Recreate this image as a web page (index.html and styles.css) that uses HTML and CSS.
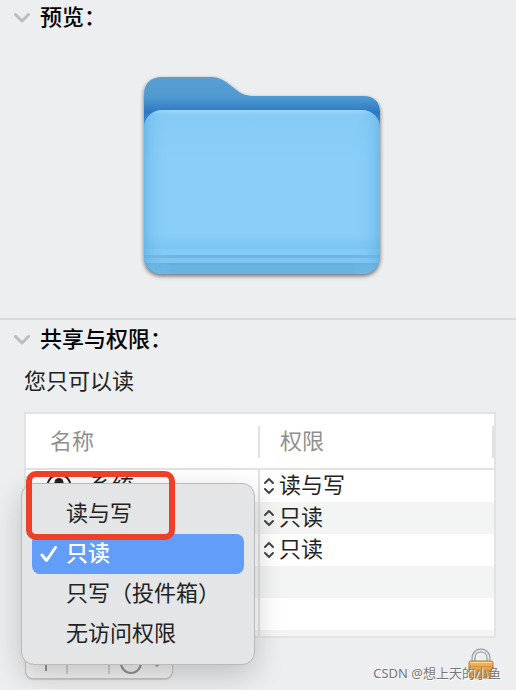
FILE: index.html
```
<!DOCTYPE html>
<html lang="zh-CN">
<head>
    <meta charset="utf-8">
    <meta name="viewport" content="width=device-width, initial-scale=1">
    <title>共享与权限</title>
    <link rel="stylesheet" href="styles.css">
</head>
<body>
    <section class="preview">
        <h2><button type="button" class="toggle">
            <svg width="16" height="10" viewBox="0 0 16 10"><path d="M1.5 1.5 8 8 14.500 1.500"/></svg>
            预览：
        </button></h2>
        <div class="folder">
            <svg width="256" height="220" viewBox="134 68 256 220" role="img" aria-label="文件夹">
                <defs>
                    <linearGradient id="back" gradientUnits="userSpaceOnUse" x1="0" y1="76" x2="0" y2="124">
                        <stop offset="0" stop-color="#5a9fd2"/>
                        <stop offset="0.45" stop-color="#4f99d0"/>
                        <stop offset="0.75" stop-color="#2c78c5"/>
                        <stop offset="1" stop-color="#3d8bcd"/>
                    </linearGradient>
                    <linearGradient id="sides">
                        <stop offset="0" stop-color="#58a9e0" stop-opacity="0.55"/>
                        <stop offset="0.03" stop-color="#6bb8e9" stop-opacity="0.4"/>
                        <stop offset="0.12" stop-color="#8acff9" stop-opacity="0"/>
                        <stop offset="0.88" stop-color="#8acff9" stop-opacity="0"/>
                        <stop offset="0.97" stop-color="#6bb8e9" stop-opacity="0.4"/>
                        <stop offset="1" stop-color="#58a9e0" stop-opacity="0.55"/>
                    </linearGradient>
                    <linearGradient id="front" x1="0" y1="0" x2="0" y2="1">
                        <stop offset="0" stop-color="#a0d9fb"/>
                        <stop offset="0.03" stop-color="#86cbf6"/>
                        <stop offset="0.3" stop-color="#8acff9"/>
                        <stop offset="0.75" stop-color="#8acff9"/>
                        <stop offset="0.84" stop-color="#7cc4f1"/>
                        <stop offset="1" stop-color="#7cc4f1"/>
                    </linearGradient>
                    <filter id="shadow" x="-10%" y="-10%" width="120%" height="120%">
                        <feDropShadow dx="0" dy="2" stdDeviation="2" flood-color="#000" flood-opacity="0.55"/>
                    </filter>
                    <clipPath id="frontClip"><rect x="144" y="110" width="236" height="164" rx="18"/></clipPath>
                </defs>
                <path filter="url(#shadow)" fill="url(#back)" d="M144 95C144 83 151 77 162 77H211C222 77 227 83 234 88C241 94 245 96 255 96H364C374 96 380 102 380 112V256C380 267 373 274 362 274H162C151 274 144 267 144 256Z"/>
                <g clip-path="url(#frontClip)">
                    <rect x="144" y="110" width="236" height="164" fill="url(#front)"/>
                    <rect x="144" y="249" width="236" height="6" fill="#85caf4"/>
                    <rect x="144" y="255" width="236" height="3" fill="#6bb5e4"/>
                    <rect x="144" y="258" width="236" height="5" fill="#7fc5f0"/>
                    <rect x="144" y="263" width="236" height="2" fill="#63addd"/>
                    <rect x="144" y="265" width="236" height="9" fill="#69b3e2"/>
                    <rect x="144" y="110" width="236" height="164" fill="url(#sides)"/>
                </g>
            </svg>
        </div>
    </section>

    <section class="sharing">
        <h2><button type="button" class="toggle">
            <svg width="16" height="10" viewBox="0 0 16 10"><path d="M1.5 1.5 8 8 14.500 1.500"/></svg>
            共享与权限：
        </button></h2>
        <p class="access">您只可以读</p>

        <div class="list">
            <table>
                <thead>
                    <tr>
                        <th class="name"><span>名称</span></th>
                        <th><span>权限</span></th>
                    </tr>
                </thead>
                <tbody>
                    <tr>
                        <td><div class="user">
                            <svg width="26" height="26" viewBox="0 0 26 26"><circle cx="13" cy="13" r="11.500" fill="none" stroke="#222" stroke-width="2"/><circle cx="13" cy="9.500" r="4.500" fill="#222"/><path d="M5 21C6 16 9 15 13 15S20 16 21 21Q17 24 13 24T5 21Z" fill="#222"/></svg>
                            系统
                        </div></td>
                        <td><div class="rights">
                            <svg width="12" height="18" viewBox="0 0 12 18"><path d="M2 6 6 2 10 6M2 12 6 16 10 12"/></svg>
                            <select aria-label="系统权限"><option>读与写</option></select>
                        </div></td>
                    </tr>
                    <tr>
                        <td></td>
                        <td><div class="rights">
                            <svg width="12" height="18" viewBox="0 0 12 18"><path d="M2 6 6 2 10 6M2 12 6 16 10 12"/></svg>
                            <select aria-label="权限"><option>只读</option></select>
                        </div></td>
                    </tr>
                    <tr>
                        <td></td>
                        <td><div class="rights">
                            <svg width="12" height="18" viewBox="0 0 12 18"><path d="M2 6 6 2 10 6M2 12 6 16 10 12"/></svg>
                            <select aria-label="权限"><option>只读</option></select>
                        </div></td>
                    </tr>
                    <tr><td></td><td></td></tr>
                    <tr><td></td><td></td></tr>
                    <tr class="last"><td></td><td></td></tr>
                </tbody>
            </table>

            <div class="menu" role="menu">
                <button type="button" role="menuitemradio" aria-checked="false">读与写</button>
                <button type="button" role="menuitemradio" aria-checked="true" class="selected">
                    <svg width="18" height="18" viewBox="0 0 18 18"><path d="M2 10 6.500 15.500 15.500 2.500"/></svg>
                    只读
                </button>
                <button type="button" role="menuitemradio" aria-checked="false">只写（投件箱）</button>
                <button type="button" role="menuitemradio" aria-checked="false">无访问权限</button>
            </div>
            <div class="mark"></div>
        </div>

        <div class="footer">
            <div class="tools">
                <button type="button" aria-label="添加"><svg width="18" height="18" viewBox="0 0 18 18"><path d="M9 1V17M1 9H17"/></svg></button>
                <button type="button" aria-label="移除"><svg width="18" height="18" viewBox="0 0 18 18"><path d="M1 9H17"/></svg></button>
                <button type="button" class="more" aria-label="更多"><svg width="42" height="22" viewBox="0 0 42 22"><circle cx="11" cy="11" r="10"/><path d="M6 11H7M11 11H12M16 11H17"/><path d="M33 9 37 13 41 9" stroke-width="3"/></svg></button>
            </div>
            <button type="button" class="lock" aria-label="锁定">
                <svg width="26" height="32" viewBox="0 0 26 32">
                    <defs>
                        <linearGradient id="gold" x1="0" y1="0" x2="0" y2="1">
                            <stop offset="0" stop-color="#f1b862"/>
                            <stop offset="0.5" stop-color="#e5a047"/>
                            <stop offset="1" stop-color="#c8812e"/>
                        </linearGradient>
                    </defs>
                    <path d="M5.500 16V11C5.500 1 20.500 1 20.500 11V16" fill="none" stroke="#8d949c" stroke-width="4"/>
                    <path d="M5.500 16V11C5.500 1 20.500 1 20.500 11V16" fill="none" stroke="#dce3ea" stroke-width="2"/>
                    <rect x="1" y="14" width="24" height="17" rx="1.500" fill="url(#gold)" stroke="#b9772c"/>
                    <path d="M2 15.500H24" stroke="#ffdc99"/>
                    <path d="M2 19.500H24M2 23.500H24M2 27.500H24" stroke="#c98734" stroke-opacity="0.6"/>
                </svg>
            </button>
            <span class="credit">CSDN @想上天的小鱼</span>
        </div>
    </section>
</body>
</html>
```
FILE: styles.css
```
* {
    box-sizing: border-box;
}

body {
    margin: 0;
    background-color: #edeef0;
    color: #222;
    font-family: "Liberation Sans", "Noto Sans CJK SC", sans-serif;
    font-size: 22px;
    line-height: 32px;
}

button, select {
    margin: 0;
    padding: 0;
    border: 0;
    background: none;
    color: inherit;
    font: inherit;
}

svg {
    display: block;
    flex: none;
}

h2 {
    margin: 0;
    font-size: 22px;
    font-weight: 500;
}

.toggle {
    display: flex;
    align-items: center;
    gap: 10px;
    height: 36px;
    padding-left: 14px;
    color: #000;
}

.toggle path {
    fill: none;
    stroke: #bcbdbf;
    stroke-width: 3;
    stroke-linecap: round;
    stroke-linejoin: round;
}

.preview {
    padding-bottom: 30px;
    border-bottom: 2px solid #d9dadc;
}

.folder {
    display: flex;
    justify-content: center;
    padding: 32px 0 0 8px;
}

.sharing {
    padding-top: 2px;
}

.access {
    margin: 0 24px 6px;
    line-height: 48px;
}

.list {
    position: relative;
    z-index: 1;
    margin: 0 20px 0 24px;
    border: 2px solid #e2e3e4;
    background-color: #fff;
}

table {
    width: 100%;
    border-collapse: separate;
    border-spacing: 0;
    table-layout: fixed;
}

th {
    padding: 12px 0 10px;
    border-bottom: 2px solid #e2e2e2;
    color: #8f8f8f;
    font-weight: 400;
    text-align: left;
}

th span {
    display: block;
    height: 32px;
    padding-left: 20px;
    border-right: 2px solid #e2e2e2;
}

th.name span {
    padding-left: 24px;
}

td {
    height: 32px;
    padding: 0;
}

td:first-child {
    border-right: 2px solid #e2e2e2;
}

tbody tr:nth-child(even) {
    background-color: #f3f5f5;
}

.last td {
    height: 6px;
}

.user {
    display: flex;
    align-items: center;
    gap: 18px;
    padding-left: 20px;
}

.rights {
    display: flex;
    align-items: center;
    gap: 4px;
    height: 32px;
    padding-left: 3px;
}

.rights path {
    fill: none;
    stroke: #444;
    stroke-width: 2;
    stroke-linecap: round;
    stroke-linejoin: round;
}

.rights select {
    flex: 1;
    height: 32px;
    appearance: none;
}

.menu {
    position: absolute;
    top: 69px;
    left: -5px;
    width: 234px;
    padding: 10px;
    border: 1px solid #b9babb;
    border-radius: 13px;
    background-color: #e4e5e7;
    box-shadow: 0 10px 30px rgba(0, 0, 0, 0.2);
}

.menu button {
    display: flex;
    align-items: center;
    gap: 8px;
    width: 100%;
    height: 40px;
    padding-left: 34px;
    border-radius: 8px;
}

.menu .selected {
    padding-left: 8px;
    background-color: #619df9;
    color: #fff;
    font-weight: 500;
}

.selected path {
    fill: none;
    stroke: #fff;
    stroke-width: 3;
    stroke-linecap: round;
    stroke-linejoin: round;
}

/* red frame round the first choice */
.mark {
    position: absolute;
    top: 57px;
    left: 0;
    width: 149px;
    height: 69px;
    border: 6px solid #ee4027;
    border-radius: 10px;
    pointer-events: none;
}

.footer {
    position: relative;
    display: flex;
    justify-content: space-between;
    align-items: flex-end;
    padding: 8px 22px 10px 25px;
}

.tools {
    display: flex;
    align-items: center;
    height: 33px;
    border: 1px solid #c4c5c6;
    border-radius: 8px;
    background-color: #f3f3f4;
    box-shadow: 0 1px 1px rgba(0, 0, 0, 0.15);
}

.tools button {
    display: flex;
    justify-content: center;
    align-items: center;
    width: 42px;
    height: 22px;
    border-right: 2px solid #d0d0d1;
}

.tools .more {
    width: 62px;
    border: 0;
}

.tools svg {
    fill: none;
    stroke: #929394;
    stroke-width: 2;
}

.credit {
    position: absolute;
    right: 15px;
    bottom: 8px;
    color: #777;
    font-family: "Noto Sans", "Noto Sans CJK SC", sans-serif;
    font-size: 13px;
    line-height: 16px;
    text-shadow: 1px 1px 0 #fff;
}
```
